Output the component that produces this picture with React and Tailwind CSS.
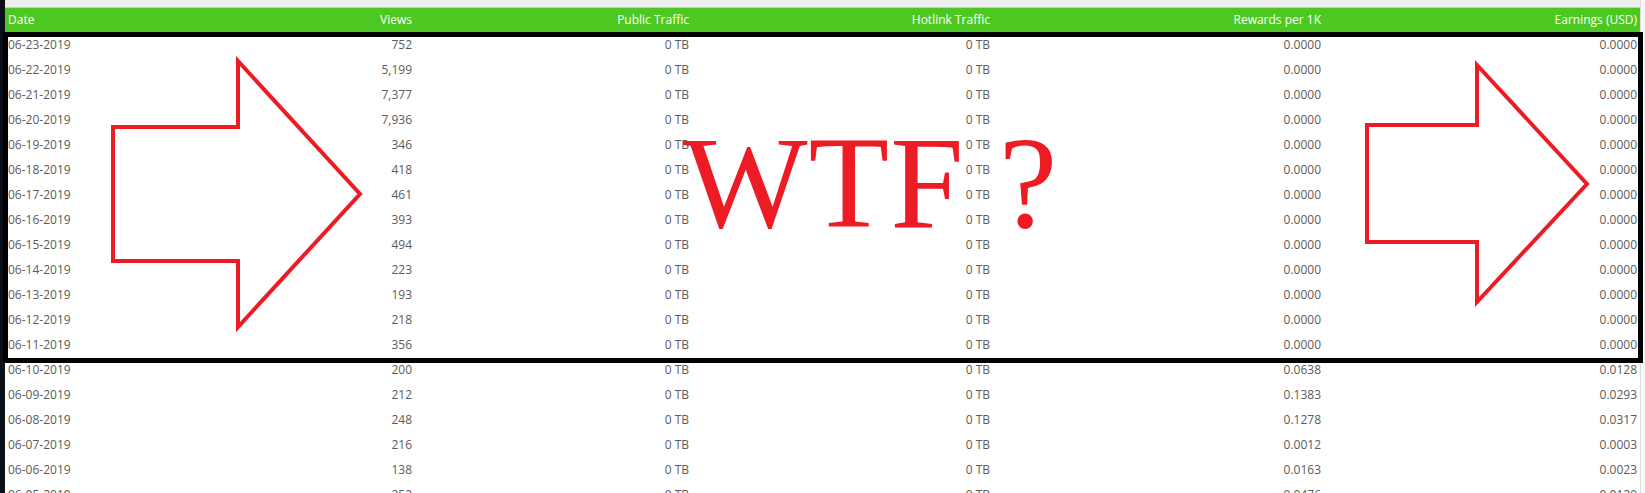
import React from "react"

const rows = [
  ["06-23-2019", "752", "0 TB", "0 TB", "0.0000", "0.0000"],
  ["06-22-2019", "5,199", "0 TB", "0 TB", "0.0000", "0.0000"],
  ["06-21-2019", "7,377", "0 TB", "0 TB", "0.0000", "0.0000"],
  ["06-20-2019", "7,936", "0 TB", "0 TB", "0.0000", "0.0000"],
  ["06-19-2019", "346", "0 TB", "0 TB", "0.0000", "0.0000"],
  ["06-18-2019", "418", "0 TB", "0 TB", "0.0000", "0.0000"],
  ["06-17-2019", "461", "0 TB", "0 TB", "0.0000", "0.0000"],
  ["06-16-2019", "393", "0 TB", "0 TB", "0.0000", "0.0000"],
  ["06-15-2019", "494", "0 TB", "0 TB", "0.0000", "0.0000"],
  ["06-14-2019", "223", "0 TB", "0 TB", "0.0000", "0.0000"],
  ["06-13-2019", "193", "0 TB", "0 TB", "0.0000", "0.0000"],
  ["06-12-2019", "218", "0 TB", "0 TB", "0.0000", "0.0000"],
  ["06-11-2019", "356", "0 TB", "0 TB", "0.0000", "0.0000"],
  ["06-10-2019", "200", "0 TB", "0 TB", "0.0638", "0.0128"],
  ["06-09-2019", "212", "0 TB", "0 TB", "0.1383", "0.0293"],
  ["06-08-2019", "248", "0 TB", "0 TB", "0.1278", "0.0317"],
  ["06-07-2019", "216", "0 TB", "0 TB", "0.0012", "0.0003"],
  ["06-06-2019", "138", "0 TB", "0 TB", "0.0163", "0.0023"],
  ["06-05-2019", "252", "0 TB", "0 TB", "0.0476", "0.0120"],
]

const headers = ["Date", "Views", "Public Traffic", "Hotlink Traffic", "Rewards per 1K", "Earnings (USD)"]

// shared column template: date | views | public | hotlink | rewards | earnings
const cols = "grid grid-cols-[205px_205px_277px_301px_331px_316px]"

export default function App() {
  return (
    <div className="relative flex h-[493px] w-[1645px] overflow-hidden bg-white font-['Open_Sans',sans-serif]">
      {/* dark sidebar edge */}
      <div className="w-[5px] shrink-0 bg-[#0b0f18]" />

      <div className="w-[1635px] shrink-0">
        <div className="h-[8px] border-b border-[#cdcdcd] bg-[#eeeeee]" />

        {/* header */}
        <div className={`${cols} h-[24px] items-center bg-[#4dc822] text-[12px] text-white`}>
          {headers.map((h, i) => (
            <div key={h} className={i === 0 ? "pl-[3px]" : "pr-[3px] text-right"}>
              {h}
            </div>
          ))}
        </div>

        {/* body */}
        {rows.map((r) => (
          <div key={r[0]} className={`${cols} h-[25px] items-center text-[12px] text-[#5b5b5b]`}>
            {r.map((c, i) => (
              <div key={i} className={i === 0 ? "pl-[3px]" : "pr-[3px] text-right"}>
                {c}
              </div>
            ))}
          </div>
        ))}
      </div>

      {/* scrollbar gutter */}
      <div className="w-[1px] shrink-0 bg-[#dcdcdc]" />
      <div className="flex-1 bg-[#f8f8f8]" />

      {/* annotation: black frame */}
      <div className="pointer-events-none absolute left-[3px] top-[32px] h-[331px] w-[1640px] border-[5px] border-black" />

      {/* annotation: arrows */}
      <svg className="pointer-events-none absolute left-0 top-0" width="1645" height="493">
        <polygon
          points="113,127 238,127 238,61 360,194 238,327 238,261 113,261"
          fill="none"
          stroke="#ed1c24"
          strokeWidth="4"
        />
        <polygon
          points="1367,125 1477,125 1477,65 1587,184 1477,302 1477,242 1367,242"
          fill="none"
          stroke="#ed1c24"
          strokeWidth="4"
        />
      </svg>

      {/* annotation: text */}
      <div className="pointer-events-none absolute left-[683px] top-[117px] whitespace-pre text-[132px] leading-none tracking-[1px] text-[#ed1c24] font-['Liberation_Serif',serif]">
        WTF ?
      </div>
    </div>
  )
}
